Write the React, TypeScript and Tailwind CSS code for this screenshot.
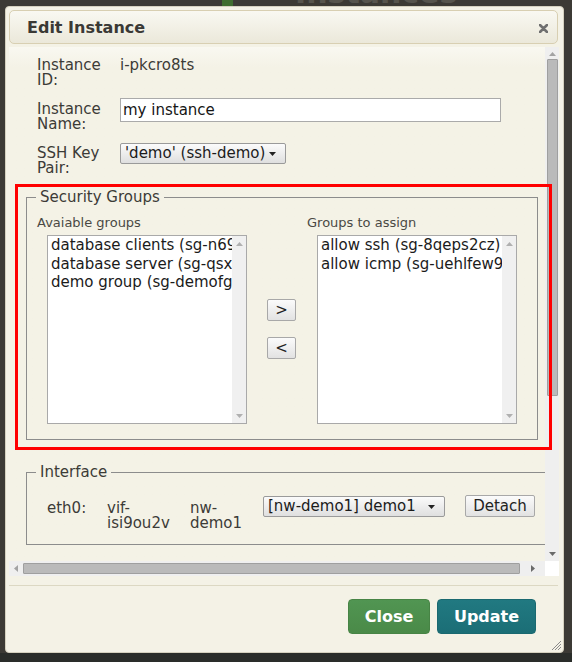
import React from "react";

function Tri({ dir, color }: { dir: "up" | "down" | "left" | "right"; color: string }) {
    const pts = {
        up: "0,4 3.5,0 7,4",
        down: "0,0 7,0 3.5,4",
        left: "4,0 4,7 0,3.5",
        right: "0,0 0,7 4,3.5",
    }[dir];
    const w = dir === "up" || dir === "down" ? 7 : 4;
    const h = dir === "up" || dir === "down" ? 4 : 7;
    return (
        <svg width={w} height={h} viewBox={`0 0 ${w} ${h}`}>
            <polygon points={pts} fill={color} />
        </svg>
    );
}

function ListBox({ items }: { items: string[] }) {
    return (
        <div className="ml-[10px] mt-[4px] flex h-[189px] w-[200px] border border-[#a9a9a9] bg-white">
            <div className="flex-1 overflow-hidden whitespace-nowrap pl-[3px] text-[15px] leading-[18.5px] text-[#1b1b1b]">
                {items.map((t) => (
                    <div key={t}>{t}</div>
                ))}
            </div>
            <div className="flex w-[14px] flex-col items-center justify-between bg-[#f0f0f0] pb-[5px] pt-[6px]">
                <Tri dir="up" color="#b0b0b0" />
                <Tri dir="down" color="#b0b0b0" />
            </div>
        </div>
    );
}

function SmallButton({ label }: { label: string }) {
    return (
        <div className="flex h-[22px] w-[29px] items-center justify-center rounded-[2px] border border-[#a8a8a8] bg-gradient-to-b from-[#fbfbfb] to-[#e2e2e2] text-[15px] leading-none text-[#222]">
            {label}
        </div>
    );
}

function Select({ label, width }: { label: string; width: string }) {
    return (
        <div
            className={`flex h-[21px] ${width} items-center justify-between rounded-[2px] border border-[#9a9a9a] bg-gradient-to-b from-[#fbfbfb] to-[#dfdfdf] pl-[4px] pr-[9px] text-[15px] leading-none text-[#1b1b1b]`}
        >
            <span>{label}</span>
            <Tri dir="down" color="#222" />
        </div>
    );
}

export default function App() {
    return (
        <div className="relative h-[662px] w-[572px] overflow-hidden bg-[#3c3a35] font-['DejaVu_Sans',sans-serif]">
            {/* page behind the modal */}
            <div className="flex h-[8px] items-end gap-[62px] overflow-hidden pl-[222px]">
                <div className="h-[14px] w-[11px] bg-[#3f6d2f]" />
                <div className="text-[30px] font-bold leading-[30px] text-[#56544d]">Instances</div>
            </div>
            <div className="absolute bottom-0 left-0 h-[9px] w-full bg-[#2a2d2a]" />

            {/* dialog */}
            <div className="absolute left-[5px] top-[6px] flex h-[647px] w-[559px] flex-col rounded-[4px] border border-[#d5d1bf] bg-[#f4f2e6]">
                {/* title bar */}
                <div className="ml-[3px] mr-[5px] mt-[3px] flex h-[34px] items-center justify-between rounded-[5px] border border-[#d8cfb2] bg-gradient-to-b from-[#f9f8f2] to-[#ebe8da] pl-[17px] pr-[9px] pt-[2px]">
                    <span className="text-[16px] font-bold text-[#3a3935]">Edit Instance</span>
                    <svg width="9" height="9" viewBox="0 0 9 9">
                        <path d="M1 1 L8 8 M8 1 L1 8" stroke="#6f6f6f" strokeWidth="2.6" strokeLinecap="round" />
                    </svg>
                </div>

                {/* scroll area */}
                <div className="ml-[3px] mr-[4px] mt-[3px] flex h-[529px] flex-col">
                    <div className="flex h-[514px]">
                        <div className="h-[514px] w-[536px] overflow-hidden bg-gradient-to-b from-[#f9f8f1] to-[#f4f2e6] to-[20px]">
                            <div className="pt-[11px] text-[15px] leading-[15px] text-[#3c3b37]">
                                <div className="flex pl-[28px]">
                                    <div className="w-[83px]">
                                        Instance
                                        <br />
                                        ID:
                                    </div>
                                    <div>i-pkcro8ts</div>
                                </div>

                                <div className="mt-[10px] flex items-start pl-[28px]">
                                    <div className="w-[83px] pt-[4px]">
                                        Instance
                                        <br />
                                        Name:
                                    </div>
                                    <input
                                        readOnly
                                        value="my instance"
                                        className="h-[24px] w-[381px] border border-[#aaaaaa] bg-white px-[2px] text-[15px] text-[#151515] outline-none"
                                    />
                                </div>

                                <div className="mt-[11px] flex items-start pl-[28px]">
                                    <div className="w-[83px] pt-[3px]">
                                        SSH Key
                                        <br />
                                        Pair:
                                    </div>
                                    <Select label="'demo' (ssh-demo)" width="w-[166px]" />
                                </div>

                                {/* Security Groups */}
                                <fieldset className="ml-[17px] mt-[12px] w-[512px] border border-[#8c8c8c] pb-[15px] pl-[10px] pt-[9px]">
                                    <legend className="-ml-[1px] px-[4px] text-[15px] leading-[18px] text-[#3c3b37]">
                                        Security Groups
                                    </legend>
                                    <div className="flex items-start">
                                        <div>
                                            <div className="text-[13px] leading-[16px] text-[#4a4944]">Avaiable groups</div>
                                            <ListBox
                                                items={[
                                                    "database clients (sg-n69ykt2e)",
                                                    "database server (sg-qsxg8a1p)",
                                                    "demo group (sg-demofgbr)",
                                                ]}
                                            />
                                        </div>
                                        <div className="ml-[20px] mt-[84px] flex flex-col gap-[16px]">
                                            <SmallButton label=">" />
                                            <SmallButton label="<" />
                                        </div>
                                        <div className="ml-[11px]">
                                            <div className="text-[13px] leading-[16px] text-[#4a4944]">Groups to assign</div>
                                            <ListBox items={["allow ssh (sg-8qeps2cz)", "allow icmp (sg-uehlfew9)"]} />
                                        </div>
                                    </div>
                                </fieldset>

                                {/* Interface */}
                                <fieldset className="ml-[17px] mt-[23px] w-[540px] border border-[#8c8c8c] pb-[13px] pl-[10px] pt-[15px]">
                                    <legend className="-ml-[1px] px-[4px] text-[15px] leading-[18px] text-[#3c3b37]">
                                        Interface
                                    </legend>
                                    <div className="ml-[10px] flex items-start">
                                        <div className="w-[60px] pt-[5px]">eth0:</div>
                                        <div className="w-[83px] pt-[5px]">
                                            vif-
                                            <br />
                                            isi9ou2v
                                        </div>
                                        <div className="w-[73px] pt-[5px]">
                                            nw-
                                            <br />
                                            demo1
                                        </div>
                                        <Select label="[nw-demo1] demo1" width="w-[182px]" />
                                        <div className="-mt-[1px] ml-[20px] flex h-[22px] w-[70px] items-center justify-center rounded-[2px] border border-[#a8a8a8] bg-gradient-to-b from-[#fbfbfb] to-[#e2e2e2] text-[15px] leading-none text-[#222]">
                                            Detach
                                        </div>
                                    </div>
                                </fieldset>
                            </div>
                        </div>

                        {/* vertical scrollbar */}
                        <div className="flex h-[514px] w-[14px] flex-col items-center bg-[#efefef]">
                            <div className="flex h-[12px] items-center justify-center pt-[1px]">
                                <Tri dir="up" color="#a3a3a3" />
                            </div>
                            <div className="h-[337px] w-[11px] rounded-[1px] border border-[#9f9f9f] bg-[#bababa]" />
                            <div className="flex-1" />
                            <div className="flex h-[14px] items-center justify-center">
                                <Tri dir="down" color="#6a6a6a" />
                            </div>
                        </div>
                    </div>

                    {/* horizontal scrollbar */}
                    <div className="flex h-[15px]">
                        <div className="flex h-[15px] w-[536px] items-center bg-[#efefef]">
                            <div className="flex w-[14px] justify-center">
                                <Tri dir="left" color="#a3a3a3" />
                            </div>
                            <div className="h-[11px] w-[497px] rounded-[1px] border border-[#9f9f9f] bg-[#bababa]" />
                            <div className="flex flex-1 justify-center">
                                <Tri dir="right" color="#6a6a6a" />
                            </div>
                        </div>
                        <div className="h-[15px] w-[14px] bg-white" />
                    </div>
                </div>

                {/* footer */}
                <div className="ml-[3px] mr-[5px] mt-[9px] h-px bg-[#dcd8c3]" />
                <div className="mt-[13px] flex justify-end gap-[7px] pr-[27px]">
                    <div className="flex h-[35px] w-[82px] items-center justify-center rounded-[4px] border border-[#478445] bg-gradient-to-b from-[#519552] to-[#4a8a48] text-[16px] font-bold text-white">
                        Close
                    </div>
                    <div className="flex h-[35px] w-[99px] items-center justify-center rounded-[4px] border border-[#1a6970] bg-gradient-to-b from-[#217981] to-[#1b6e76] text-[16px] font-bold text-white">
                        Update
                    </div>
                </div>

                {/* resize grip */}
                <svg className="absolute bottom-[1px] right-[1px]" width="11" height="11" viewBox="0 0 11 11">
                    <path d="M1 10 L10 1 M4 10 L10 4 M7 10 L10 7" stroke="#8a8a8a" strokeWidth="1" />
                </svg>
            </div>

            {/* highlight annotation */}
            <div className="pointer-events-none absolute left-[15px] top-[184px] h-[266px] w-[537px] border-[3px] border-[#ff0000]" />
        </div>
    );
}
